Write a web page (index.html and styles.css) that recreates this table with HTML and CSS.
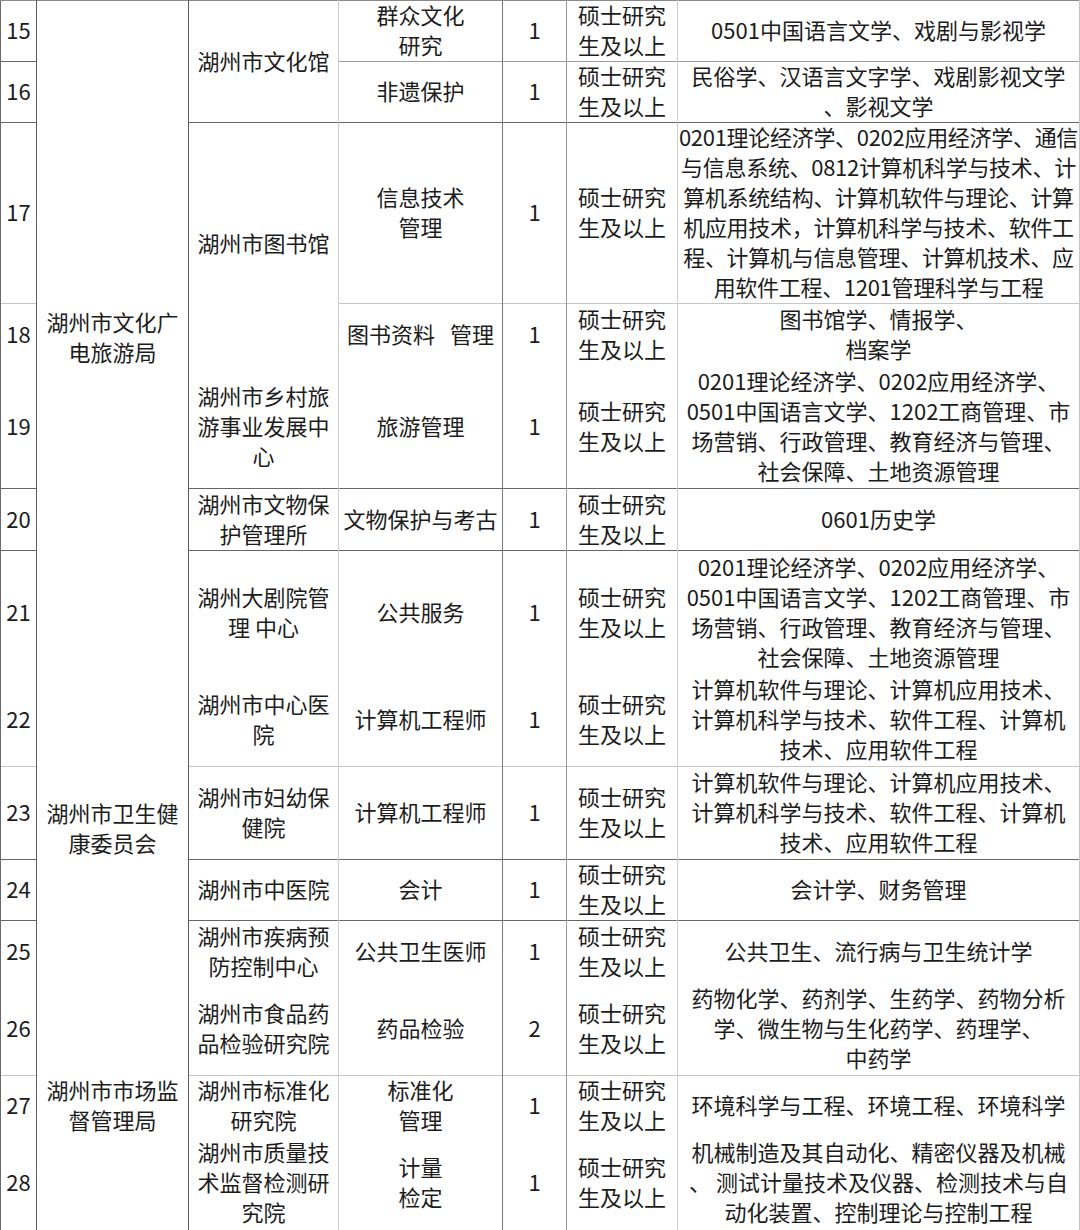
FILE: index.html
```html
<!DOCTYPE html>
<html lang="zh-CN">
<head>
<meta charset="utf-8">
<title>岗位表</title>
<link rel="stylesheet" href="styles.css">
</head>
<body>
<table class="sheet">
  <colgroup>
    <col class="w-n"><col class="w-d"><col class="w-u"><col class="w-p"><col class="w-c"><col class="w-e"><col class="w-m">
  </colgroup>
  <tbody>
    <tr class="r61 b-top">
      <td class="n">15</td>
      <td class="d" rowspan="7">湖州市文化广<br>电旅游局</td>
      <td class="u" rowspan="2">湖州市文化馆</td>
      <td class="p">群众文化<br>研究</td>
      <td class="c">1</td>
      <td class="e">硕士研究<br>生及以上</td>
      <td class="m">0501中国语言文学、戏剧与影视学</td>
    </tr>
    <tr class="r61 b-mid">
      <td class="n">16</td>
      <td class="p">非遗保护</td>
      <td class="c">1</td>
      <td class="e">硕士研究<br>生及以上</td>
      <td class="m">民俗学、汉语言文字学、戏剧影视文学<br>、影视文学</td>
    </tr>
    <tr class="r181 b-dark">
      <td class="n">17</td>
      <td class="u" rowspan="2">湖州市图书馆</td>
      <td class="p">信息技术<br>管理</td>
      <td class="c">1</td>
      <td class="e">硕士研究<br>生及以上</td>
      <td class="m tight">0201理论经济学、0202应用经济学、通信<br>与信息系统、0812计算机科学与技术、计<br>算机系统结构、计算机软件与理论、计算<br>机应用技术，计算机科学与技术、软件工<br>程、计算机与信息管理、计算机技术、应<br>用软件工程、1201管理科学与工程</td>
    </tr>
    <tr class="r62 b-light">
      <td class="n">18</td>
      <td class="p">图书资料<span class="gap"></span>管理</td>
      <td class="c">1</td>
      <td class="e">硕士研究<br>生及以上</td>
      <td class="m">图书馆学、情报学、<br>档案学</td>
    </tr>
    <tr class="r123">
      <td class="n">19</td>
      <td class="u">湖州市乡村旅<br>游事业发展中<br>心</td>
      <td class="p">旅游管理</td>
      <td class="c">1</td>
      <td class="e">硕士研究<br>生及以上</td>
      <td class="m">0201理论经济学、0202应用经济学、<br>0501中国语言文学、1202工商管理、市<br>场营销、行政管理、教育经济与管理、<br>社会保障、土地资源管理</td>
    </tr>
    <tr class="r62 b-dark">
      <td class="n">20</td>
      <td class="u">湖州市文物保<br>护管理所</td>
      <td class="p">文物保护与考古</td>
      <td class="c">1</td>
      <td class="e">硕士研究<br>生及以上</td>
      <td class="m">0601历史学</td>
    </tr>
    <tr class="r124 b-dark">
      <td class="n">21</td>
      <td class="u">湖州大剧院管<br>理 中心</td>
      <td class="p">公共服务</td>
      <td class="c">1</td>
      <td class="e">硕士研究<br>生及以上</td>
      <td class="m">0201理论经济学、0202应用经济学、<br>0501中国语言文学、1202工商管理、市<br>场营销、行政管理、教育经济与管理、<br>社会保障、土地资源管理</td>
    </tr>
    <tr class="r92">
      <td class="n">22</td>
      <td class="d" rowspan="4">湖州市卫生健<br>康委员会</td>
      <td class="u">湖州市中心医<br>院</td>
      <td class="p">计算机工程师</td>
      <td class="c">1</td>
      <td class="e">硕士研究<br>生及以上</td>
      <td class="m">计算机软件与理论、计算机应用技术、<br>计算机科学与技术、软件工程、计算机<br>技术、应用软件工程</td>
    </tr>
    <tr class="r93 b-light">
      <td class="n">23</td>
      <td class="u">湖州市妇幼保<br>健院</td>
      <td class="p">计算机工程师</td>
      <td class="c">1</td>
      <td class="e">硕士研究<br>生及以上</td>
      <td class="m">计算机软件与理论、计算机应用技术、<br>计算机科学与技术、软件工程、计算机<br>技术、应用软件工程</td>
    </tr>
    <tr class="r61 b-dark">
      <td class="n">24</td>
      <td class="u">湖州市中医院</td>
      <td class="p">会计</td>
      <td class="c">1</td>
      <td class="e">硕士研究<br>生及以上</td>
      <td class="m">会计学、财务管理</td>
    </tr>
    <tr class="r62 b-dark">
      <td class="n">25</td>
      <td class="u">湖州市疾病预<br>防控制中心</td>
      <td class="p">公共卫生医师</td>
      <td class="c">1</td>
      <td class="e">硕士研究<br>生及以上</td>
      <td class="m">公共卫生、流行病与卫生统计学</td>
    </tr>
    <tr class="r93">
      <td class="n">26</td>
      <td class="d" rowspan="3">湖州市市场监<br>督管理局</td>
      <td class="u">湖州市食品药<br>品检验研究院</td>
      <td class="p">药品检验</td>
      <td class="c">2</td>
      <td class="e">硕士研究<br>生及以上</td>
      <td class="m">药物化学、药剂学、生药学、药物分析<br>学、微生物与生化药学、药理学、<br>中药学</td>
    </tr>
    <tr class="r61 b-light">
      <td class="n">27</td>
      <td class="u">湖州市标准化<br>研究院</td>
      <td class="p">标准化<br>管理</td>
      <td class="c">1</td>
      <td class="e">硕士研究<br>生及以上</td>
      <td class="m">环境科学与工程、环境工程、环境科学</td>
    </tr>
    <tr class="r93">
      <td class="n">28</td>
      <td class="u">湖州市质量技<br>术监督检测研<br>究院</td>
      <td class="p">计量<br>检定</td>
      <td class="c">1</td>
      <td class="e">硕士研究<br>生及以上</td>
      <td class="m">机械制造及其自动化、精密仪器及机械<br>、 测试计量技术及仪器、检测技术与自<br>动化装置、控制理论与控制工程</td>
    </tr>
  </tbody>
</table>
</body>
</html>
```
FILE: styles.css
```css
html, body {
  margin: 0;
  padding: 0;
  background: #ffffff;
}

body {
  width: 1080px;
  height: 1230px;
  overflow: hidden;
  font-family: "Noto Sans CJK SC", "Noto Sans", sans-serif;
  color: #1c1c1c;
}

.sheet {
  width: 1079px;
  table-layout: fixed;
  border-collapse: collapse;
  border-spacing: 0;
  font-size: 22px;
  line-height: 30px;
}

.w-n { width: 36px; }
.w-d { width: 152px; }
.w-u { width: 150px; }
.w-p { width: 164px; }
.w-c { width: 64px; }
.w-e { width: 111px; }
.w-m { width: 402px; }

.sheet td {
  padding: 0;
  text-align: center;
  vertical-align: middle;
  white-space: nowrap;
  overflow: visible;
}

/* optical baseline compensation: lifts the text block 2px
   without changing the content height of the cell */
.sheet td::before {
  content: "";
  display: block;
  margin-top: -2px;
}
.sheet td::after {
  content: "";
  display: block;
  height: 2px;
}

/* vertical grid lines */
.sheet td.n {
  border-left: 1px solid #6a6a6a;
  border-right: 1px solid #5e5e5e;
}
.sheet td.d { border-right: 1px solid #5e5e5e; }
.sheet td.u { border-right: 1px solid #cfcfcf; }
.sheet td.p { border-right: 1px solid #7a7a7a; }
.sheet td.c { border-right: 1px solid #9a9a9a; }
.sheet td.e { border-right: 1px solid #cfcfcf; }
.sheet td.m { border-right: 1px solid #c4c4c4; }

/* horizontal grid lines */
.b-top > td { border-top: 1px solid #8a8a8a; }
.b-dark > td { border-top: 1px solid #666666; }
.b-mid > td { border-top: 1px solid #9c9c9c; }
.b-mid > td.n { border-top-color: #666666; }
.b-light > td { border-top: 1px solid #c6c6c6; }

/* row heights */
.r61 { height: 61px; }
.r62 { height: 62px; }
.r92 { height: 92px; }
.r93 { height: 93px; }
.r123 { height: 123px; }
.r124 { height: 124px; }
.r181 { height: 181px; }

.tight { letter-spacing: -0.3px; }

.gap {
  display: inline-block;
  width: 15px;
}
```
